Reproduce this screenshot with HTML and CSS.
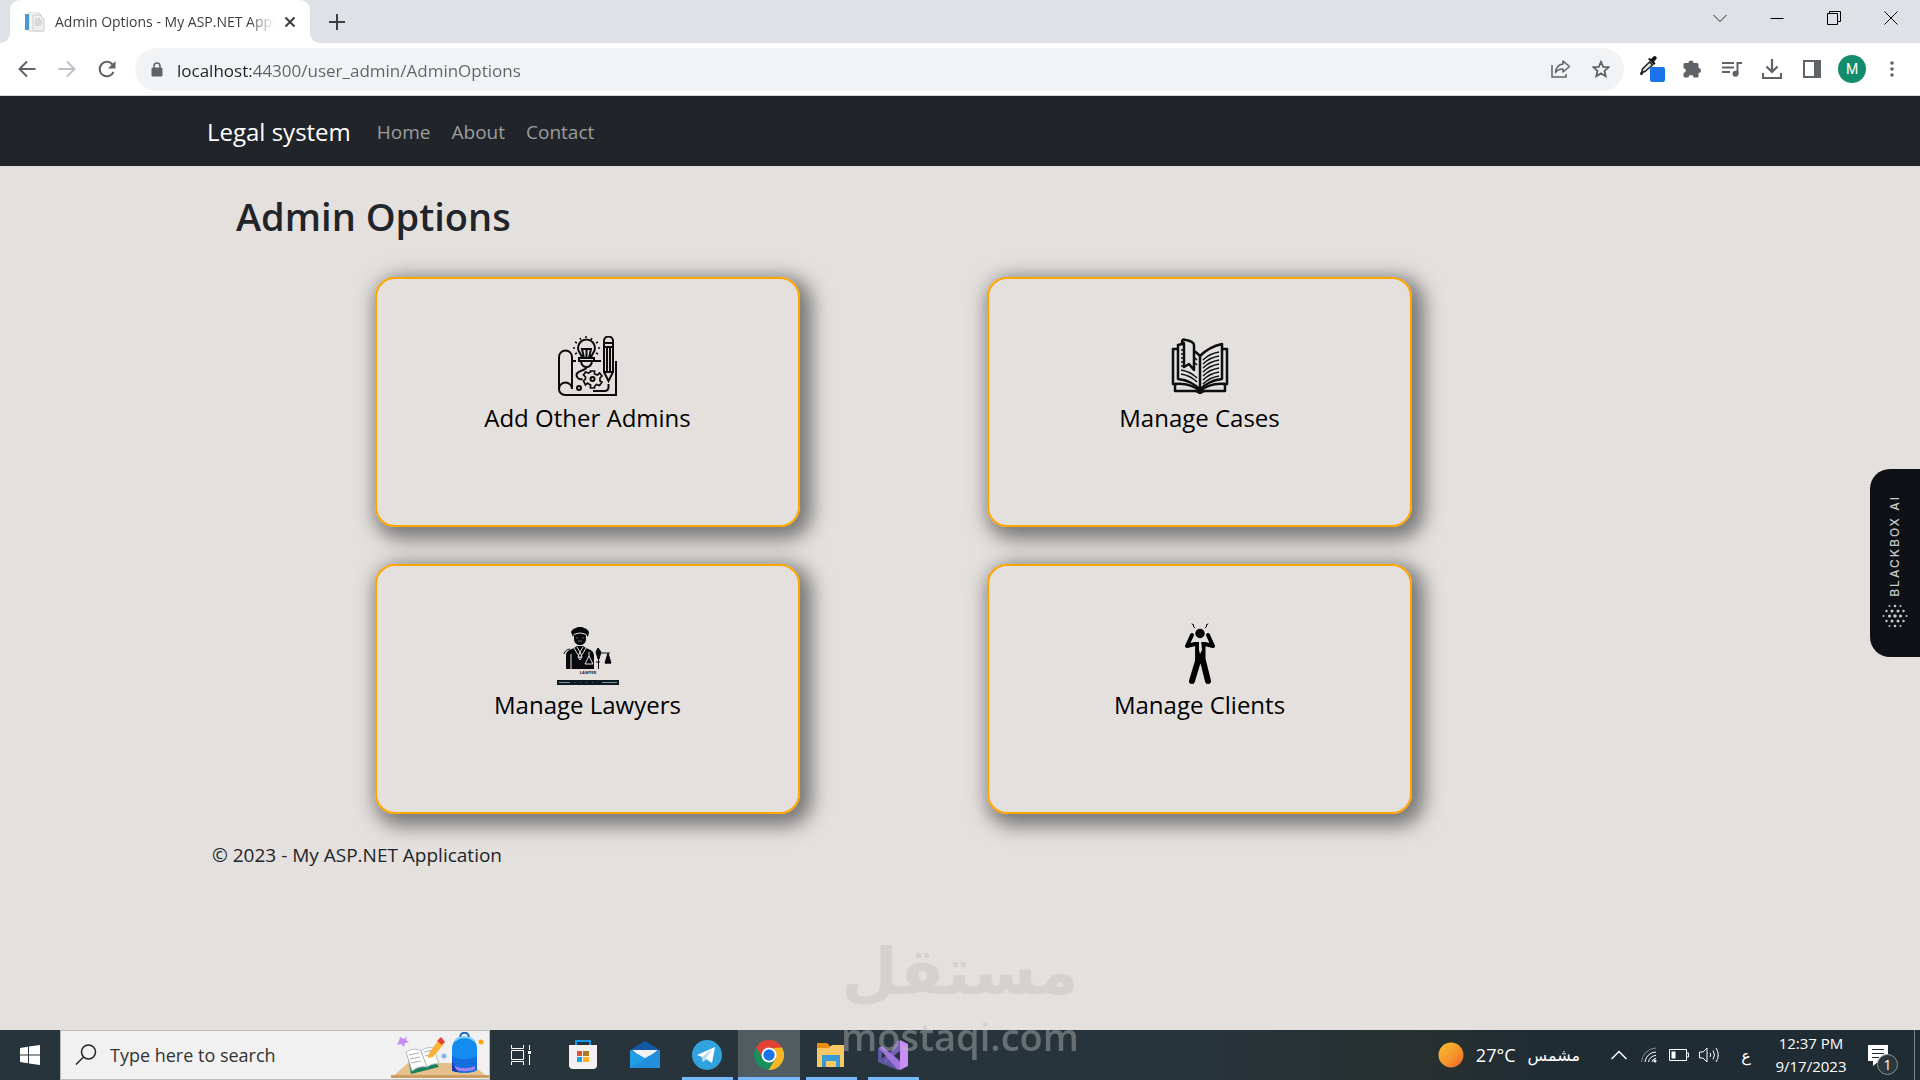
FILE: index.html
```html
<!DOCTYPE html>
<html lang="en">
<head>
<meta charset="utf-8">
<meta name="viewport" content="width=device-width, initial-scale=1">
<title>Admin Options - My ASP.NET Application</title>
<link rel="stylesheet" href="styles.css">
</head>
<body>
<header class="browser">
  <div class="tabstrip">
    <div class="tab">
      <svg class="favicon" width="20" height="20" viewBox="0 0 20 20"><path d="M4 0h9l3 3v16H4z" fill="#f4f4f4" stroke="#d5d5d5"/><path d="M8 3h7l4 4v12H8z" fill="#eee" stroke="#ccc"/><path d="M0 2h4v16H0z" fill="#4a9ad4"/><path d="M10 7h5M10 9h7M10 11h7M10 13h6" stroke="#bcc0c4"/></svg>
      <span class="tab-title">Admin Options - My ASP.NET Application</span>
      <button class="tab-close" aria-label="Close tab"><svg width="12" height="12" viewBox="0 0 12 12"><path d="M1.500 1.500l9 9m0-9l-9 9" stroke="#3c4043" stroke-width="2"/></svg></button>
    </div>
    <button class="new-tab" aria-label="New tab"><svg width="16" height="16" viewBox="0 0 16 16"><path d="M8 0v16M0 8h16" stroke="#3c4043" stroke-width="2"/></svg></button>
    <div class="window-controls">
      <button aria-label="Search tabs"><svg width="14" height="14" viewBox="0 0 14 14"><path d="M.5 4l6.500 6.500L13.500 4" fill="none" stroke="#222"/></svg></button>
      <button aria-label="Minimize"><svg width="14" height="14" viewBox="0 0 14 14"><path d="M.5 7.500h13" stroke="#000"/></svg></button>
      <button aria-label="Restore"><svg width="14" height="14" viewBox="0 0 14 14"><path d="M.5 2.500h10v11H.5zM2.500 2.500v-2h11v10h-3" fill="none" stroke="#000"/></svg></button>
      <button aria-label="Close"><svg width="14" height="14" viewBox="0 0 14 14"><path d="M.5.5l13 13m0-13l-13 13" stroke="#000"/></svg></button>
    </div>
  </div>
  <div class="toolbar">
    <button class="nav-btn" aria-label="Back"><svg width="18" height="18" viewBox="0 0 18 18"><path d="M17.500 9H2M9 1.500L1.500 9 9 16.500" fill="none" stroke="#5f6368" stroke-width="2"/></svg></button>
    <button class="nav-btn" aria-label="Forward"><svg width="18" height="18" viewBox="0 0 18 18"><path d="M.5 9H16M9 1.500L16.500 9 9 16.500" fill="none" stroke="#bdc1c6" stroke-width="2"/></svg></button>
    <button class="nav-btn" aria-label="Reload"><svg width="18" height="18" viewBox="0 0 18 18"><path d="M15.500 12A7.200 7.200 0 1 1 14.500 4.500" fill="none" stroke="#5f6368" stroke-width="2"/><path d="M17.500 1v7.500H10z" fill="#5f6368"/></svg></button>
    <div class="omnibox">
      <svg width="12" height="15" viewBox="0 0 12 15"><path d="M3 6V4a3 3 0 0 1 6 0v2" fill="none" stroke="#5f6368" stroke-width="1.500"/><rect x=".5" y="5.500" width="11" height="9" rx="1.500" fill="#5f6368"/></svg>
      <input class="address" type="text" aria-label="Address" value="localhost:44300/user_admin/AdminOptions">
      <button aria-label="Share"><svg width="20" height="18" viewBox="0 0 20 18"><path d="M1 5v12h14v-3" fill="none" stroke="#5f6368" stroke-width="1.500"/><path d="M12 1l6.500 5.500L12 12V9C8.500 9 6 10 4.500 12.500 5 8 7.500 4.500 12 4z" fill="none" stroke="#5f6368" stroke-width="1.500" stroke-linejoin="round"/></svg></button>
      <button aria-label="Bookmark"><svg width="18" height="18" viewBox="0 0 18 18"><path d="M9 1.800l2.200 5 5.300.5-4 3.600 1.200 5.300L9 13.400l-4.700 2.800 1.200-5.300-4-3.600 5.300-.5z" fill="none" stroke="#5f6368" stroke-width="1.800"/></svg></button>
    </div>
    <div class="extensions">
      <button aria-label="Color picker"><svg width="26" height="28" viewBox="0 0 26 28"><path d="M2.500 18l1-4 7-7 3 3-7 6z" fill="#dfe8e6" stroke="#222" stroke-width="1.500"/><path d="M9 4l6 6 1.500-1.500-1.500-2L17.500 4A2 2 0 0 0 14.500 1.500L12 4l-1.500-1z" fill="#111"/><circle cx="2.500" cy="18.500" r="1.500" fill="#222"/><rect x="11" y="12" width="15" height="15" rx="2" fill="#1a73e8"/></svg></button>
      <button aria-label="Extensions"><svg width="18" height="18" viewBox="0 0 18 18"><path d="M1.800 3H5.500a2.500 2.500 0 1 1 5 0H14a1.500 1.500 0 0 1 1.500 1.500V8a2.500 2.500 0 1 1 0 5v3A1.500 1.500 0 0 1 14 17.500H10.500a2.200 2.200 0 1 0-5 0H2A1.500 1.500 0 0 1 .5 16v-3.200a2.300 2.300 0 1 0 0-4.600V4.500A1.500 1.500 0 0 1 1.800 3z" fill="#5f6368"/></svg></button>
      <button aria-label="Media control"><svg width="20" height="16" viewBox="0 0 20 16"><path d="M0 2h12M0 6.500h12M0 11h8M15.500 13V2H20" fill="none" stroke="#5f6368" stroke-width="2"/><circle cx="13.500" cy="12.800" r="3" fill="#5f6368"/></svg></button>
      <button aria-label="Downloads"><svg width="20" height="20" viewBox="0 0 20 20"><path d="M10 0v12M4.500 7.500L10 13l5.500-5.500M1 14v5h18v-5" fill="none" stroke="#5f6368" stroke-width="2.200"/></svg></button>
      <button aria-label="Side panel"><svg width="18" height="18" viewBox="0 0 18 18"><rect x="1" y="1" width="16" height="16" fill="none" stroke="#5f6368" stroke-width="2"/><path d="M11 1h6v16h-6z" fill="#5f6368"/></svg></button>
      <button class="avatar" aria-label="Profile">M</button>
      <button aria-label="Menu"><svg width="4" height="16" viewBox="0 0 4 16"><circle cx="2" cy="2" r="1.800" fill="#5f6368"/><circle cx="2" cy="8" r="1.800" fill="#5f6368"/><circle cx="2" cy="14" r="1.800" fill="#5f6368"/></svg></button>
    </div>
  </div>
</header>

<div class="page">
  <nav class="navbar">
    <div class="container navbar-row">
      <a class="brand" href="#">Legal system</a>
      <a class="nav-link" href="#">Home</a>
      <a class="nav-link" href="#">About</a>
      <a class="nav-link" href="#">Contact</a>
    </div>
  </nav>
  <main class="container">
    <h1>Admin Options</h1>
    <div class="cards">
      <a class="card" href="#">
        <svg width="62" height="62" viewBox="0 0 62 62" fill="none" stroke="#0b0b0d" stroke-width="2">
          <path d="M2 53V21a6.500 6.500 0 0 1 13 0v32M2 53a6.500 6.500 0 0 1 13 0M2 53a6 6 0 0 0 6 6h51V25M15 25h4M38 25h6"/>
          <path d="M25 22c0-4-4-5-4-10a8.500 8.500 0 0 1 17 0c0 5-4 6-4 10M27 22l-2-9h9l-2 9M29.500 13v9"/>
          <path d="M22 22h15v3H22zM24 26c1 4 3 5 5.500 5s4.500-1 5.500-5M29.500 31c0 4-10 3-10 8 0 3 3 5 6 4"/>
          <path d="M29 0v2M23 2l1 2M35 2l-1 2M18 6l2 1M41 6l-2 1M16 12h2M41 12h2M18 18l2-1M41 18l-2-1" stroke-width="1.500"/>
          <path d="M47 36V5a4.500 4.500 0 0 1 9 0v31l-4.500 9zM47 7h9M47 11h9M47 36h9M50 12v24M53 12v24M51.500 48v3c0 3-2 4-4 4H36"/>
          <path d="M33.500 35h4v3l3 1 2-2 2.500 3-2 2v3l2 1-2.500 3.500-3-1-2 2v1.500h-4V49l-3-2-2 2-2-4 2-2v-2l-2-2 2-3 3 1 2-1z" stroke-width="1.700"/><circle cx="35.500" cy="43" r="2"/><circle cx="22" cy="52" r="2"/>
        </svg>
        <span>Add Other Admins</span>
      </a>
      <a class="card" href="#">
        <svg width="62" height="62" viewBox="0 0 62 62" fill="none" stroke="#0b0f12" stroke-width="2.500" stroke-linejoin="round">
          <path d="M8 13H4v35h4M54 13h4v35h-4M6 48v7h20c3 0 3 2 5 2s2-2 5-2h20v-7"/>
          <path d="M13 8L9 9v34c9 1 17 5 22 11 5-6 13-10 22-11V8c-9 2-17 7-22 12-2-2-4-4-6-5M31 20v35"/>
          <path d="M6 48c11-1 18 1 25 7 7-6 14-8 25-7"/>
          <path d="M34 24c4-4 10-7 16-8M34 28c4-4 10-7 16-8M34 32c4-4 10-7 16-8M34 36c4-4 10-7 16-8M34 40c4-4 10-7 16-8M34 44c4-4 10-7 16-8M34 48c4-4 10-7 16-8M12 14h3M12 18h3M12 22h3M12 26h3M12 30h3M12 34c6 1 12 4 16 8M12 38c6 1 12 4 16 8M26 22l2 2M26 27l2 2" stroke-width="1.500"/>
          <path d="M13 8c0-5 1-5 4-4 5 1 8 2 8 5v25l-5-6-5 3V9c0-3 0-3-2-1z" fill="#e4e0dd"/>
        </svg>
        <span>Manage Cases</span>
      </a>
      <a class="card" href="#">
        <svg width="62" height="62" viewBox="0 0 62 62">
          <path d="M14 9c1-3 6-5 9-5s8 2 9 5l-1 5-2-3c-4-2-8-2-12 0l-1 3z" fill="#08090c"/><path d="M17 12c4-2 8-2 12 0v4c0 4-3 6-6 6s-6-2-6-6z" fill="#08090c"/><path d="M19 15h2m4 0h2M21 18h4" stroke="#667"/>
          <path d="M9 46V33c0-5 3-6 8-8l3-2h6l3 2c5 2 8 3 8 8v13z" fill="#08090c"/><path d="M17 25l6 10 6-10M20 24l3 5 3-5M23 29l-2 5 2 3 2-3zM14 31v15M32 29v4M32 33l-4 8h8z" fill="none" stroke="#e4e0dd"/>
          <path d="M7 31c1-3 3-5 6-5M39 30h14" fill="none" stroke="#17181c"/><path d="M41 25l3 4-2 7h-1l-2-7zM41.500 36v10M39 39h4M51 30l-3 10h6zM48 40h6" stroke="#08090c" fill="#08090c"/>
          <path d="M0 57h62v5H0z" fill="#0c1a22"/><path d="M2 59.500h11M45 59.500h15" stroke="#84909a"/><path d="M17 59.500h24" stroke="#566570" stroke-dasharray="1 5"/>
          <text class="icon-caption" x="31" y="51" text-anchor="middle">LAWYER</text>
        </svg>
        <span>Manage Lawyers</span>
      </a>
      <a class="card" href="#">
        <svg width="62" height="62" viewBox="0 0 62 62" fill="none" stroke="#000" stroke-linecap="round" stroke-linejoin="round">
          <path d="M23 12l-5 11 8-2h10l8 2-5-11" stroke-width="4"/><path d="M27 20h9v20h-9z" fill="#000" stroke-width="1"/><path d="M29 38l-6 20M34 38l5 20" stroke-width="6"/><circle cx="31" cy="10.500" r="4.700" fill="#000" stroke="none"/><path d="M30 17h2l1 10-2 4-1-4z" fill="#e4e0dd" stroke="none"/><path d="M23 1l2 1-1 1 2 2M39 1l-2 1 1 1-2 2"/>
        </svg>
        <span>Manage Clients</span>
      </a>
    </div>
    <footer>© 2023 - My ASP.NET Application</footer>
  </main>
</div>

<aside class="blackbox">
  <span>BLACKBOX AI</span>
  <svg width="26" height="26" viewBox="0 0 26 26" fill="#c9cacc"><circle cx="7.500" cy="3" r="1"/><circle cx="13" cy="3" r="1.300"/><circle cx="18.500" cy="3" r="1"/><circle cx="4.500" cy="8" r="1.200"/><circle cx="10" cy="8" r="1.500"/><circle cx="16" cy="8" r="1.500"/><circle cx="21.500" cy="8" r="1.200"/><circle cx="1.500" cy="13" r="1"/><circle cx="7.500" cy="13" r="1.600"/><circle cx="13" cy="13" r="1.800"/><circle cx="18.500" cy="13" r="1.600"/><circle cx="24.500" cy="13" r="1"/><circle cx="4.500" cy="18" r="1.200"/><circle cx="10" cy="18" r="1.500"/><circle cx="16" cy="18" r="1.500"/><circle cx="21.500" cy="18" r="1.200"/><circle cx="7.500" cy="23" r="1"/><circle cx="13" cy="23" r="1.300"/><circle cx="18.500" cy="23" r="1"/></svg>
</aside>

<div class="taskbar">
  <button class="start" aria-label="Start"><svg width="20" height="20" viewBox="0 0 20 20" fill="#fff"><path d="M0 3l8-1.200V9.500H0zM9 1.600L20 0v9.500H9zM0 10.500h8v7.700L0 17zM9 10.500h11V20L9 18.400z"/></svg></button>
  <div class="search">
    <svg width="22" height="22" viewBox="0 0 22 22" fill="none" stroke="#222" stroke-width="1.500"><circle cx="13.500" cy="8" r="7"/><path d="M8.500 13L1 20.500"/></svg>
    <input type="text" aria-label="Search" placeholder="Type here to search">
    <svg width="98" height="46" viewBox="0 0 98 46"><path d="M0 46l17-15h62l19 15z" fill="#e6c08b"/><path d="M0 43h98v3H0z" fill="#cd9c62"/><path d="M9 5l4 2 3-3-1 4 3 2-4 1-1 4-3-3-4 1 2-4z" fill="#c88bf4"/><path d="M16 22l4 20 28-7-3-5z" fill="#16805c"/><path d="M15 20c5-3 10-4 15-1 4-3 8-4 13-3l5 16c-5-1-9 1-12 3-5-1-10 0-15 4z" fill="#fff" stroke="#b8bcc0"/><path d="M30 19l6 16M18 23l10-2M19 27l10-2M20 31l10-2M33 20l9-2M34 24l9-2" stroke="#a9aeb4"/><path d="M38 21l9-12 5 4-10 12-5 1z" fill="#f9b233"/><path d="M46 9l4-4 4 5-3 3z" fill="#e5432d"/><circle cx="53" cy="24" r="2.500" fill="#79b9ef"/><circle cx="90" cy="10" r="2.500" fill="#fba512"/><path d="M69 6c0-7 9-7 9 0" fill="none" stroke="#1763c9" stroke-width="2"/><path d="M61 16c0-14 25-14 25 0v21c0 5-25 5-25 0z" fill="#138bef"/><path d="M64 9c4-5 15-5 19 0" fill="none" stroke="#76cfff" stroke-width="2"/><path d="M61 24c7 4 18 4 25 0v13c0 5-25 5-25 0z" fill="#126fdd"/><path d="M64 34c6 3 13 3 20 0v3c-4 3-16 3-20 0z" fill="#a981ee"/><path d="M61 27v12c3 1 5 1 7 1-4-3-6-8-7-13z" fill="#163fad"/></svg>
  </div>
  <div class="apps">
    <button aria-label="Task view"><svg width="20" height="20" viewBox="0 0 20 20" fill="none" stroke="#fff"><path d="M.5 0v3.500h12V0M.5 20v-3.500h12V20M.5 5.500h12v9H.5zM18.500 0v5M18.500 10v10"/><path d="M17 6h3v3h-3z" fill="#fff" stroke="none"/></svg></button>
    <button aria-label="Microsoft Store"><svg width="30" height="30" viewBox="0 0 30 30"><path d="M8 6V1h14v5" fill="none" stroke="#1699e8" stroke-width="2"/><path d="M1 5h28v20q0 4-4 4H5q-4 0-4-4z" fill="#f2f2f2"/><path d="M9 11h5v5H9z" fill="#e84e32"/><path d="M15 11h6v5h-6z" fill="#ad7a1f"/><path d="M9 17h5v5H9z" fill="#1b9ff1"/><path d="M15 17h6v5h-6z" fill="#ffb31a"/></svg></button>
    <button aria-label="Mail"><svg width="30" height="30" viewBox="0 0 30 30"><path d="M0 10L15 1l15 9v8H0z" fill="#1459a8"/><path d="M2 10h26L15 20z" fill="#f2f2f2"/><path d="M0 10l15 8 15-8v18H0z" fill="#209fe7"/><path d="M30 10L0 28h30z" fill="#238edc"/></svg></button>
    <button class="running" aria-label="Telegram"><svg width="30" height="30" viewBox="0 0 30 30"><circle cx="15" cy="15" r="15" fill="#30a3df"/><path d="M5 15L23 7l-3 16-6-4-3 3-1-5z" fill="#fff"/><path d="M10 17l10-8-6 9-3 4z" fill="#b8dced"/></svg></button>
    <button class="running active" aria-label="Google Chrome"><svg width="30" height="30" viewBox="0 0 30 30"><circle cx="15" cy="15" r="15" fill="#188f5c"/><path d="M2 7.500a15 15 0 0 1 26 0L22 11H15l-6 7z" fill="#e34133"/><path d="M28 7.500A15 15 0 0 1 14.500 30L22 18 19 8z" fill="#f8b52a"/><circle cx="15" cy="15" r="7.500" fill="#fff"/><circle cx="15" cy="15" r="5.700" fill="#1a73e8"/></svg></button>
    <button class="running" aria-label="File Explorer"><svg width="28" height="26" viewBox="0 0 28 26"><path d="M0 1h10l3 3h9v4H0z" fill="#e98d12"/><path d="M0 6h12l3-3h12v22H0z" fill="#f9c865"/><path d="M5 25V13h18v12h-4v-6H9v6z" fill="#389bd7"/></svg></button>
    <button class="running" aria-label="Visual Studio"><svg width="30" height="30" viewBox="0 0 30 30"><path d="M0 8l4-2 18 21-2 3L0 22zM4 11v8l4-4z" fill="#6057a4" fill-rule="evenodd"/><path d="M6 23L20 0l3 2v8L6 24z" fill="#7465b4"/><path d="M4 6l18 15v9l-3-1L1 8z" fill="#a074dc"/><path d="M22 0l8 4v22l-8 4z" fill="#c98df4"/></svg></button>
  </div>
  <div class="tray">
    <button class="weather"><svg width="26" height="26" viewBox="0 0 26 26"><defs><linearGradient id="sun" x1="0" y1="0" x2="1" y2="1"><stop stop-color="#f9bd30"/><stop offset=".6" stop-color="#f3922a"/><stop offset="1" stop-color="#ec5a2c"/></linearGradient></defs><circle cx="13" cy="13" r="12.500" fill="url(#sun)"/></svg><span>27°C</span><span lang="ar" class="arabic">مشمس</span></button>
    <button class="tray-icon" aria-label="Show hidden icons"><svg width="16" height="10" viewBox="0 0 16 10"><path d="M.5 9L8 1.500 15.500 9" fill="none" stroke="#fff" stroke-width="1.500"/></svg></button>
    <button class="tray-icon" aria-label="Wi-Fi"><svg width="16" height="16" viewBox="0 0 16 16" fill="none" stroke="#fff"><path d="M.5 15A15 15 0 0 1 15 1" stroke="#83898c"/><path d="M4 15A11 11 0 0 1 15 5M7.500 15A7.500 7.500 0 0 1 15 8.500M11 15a4 4 0 0 1 4-3.500"/><circle cx="14" cy="14" r="1.500" fill="#fff" stroke="none"/></svg></button>
    <button class="tray-icon" aria-label="Battery"><svg width="20" height="12" viewBox="0 0 20 12"><path d="M.5.5h17v11H.5zM18 4h1.500v4H18" fill="none" stroke="#fff"/><path d="M2.500 2.500h4v7h-4z" fill="#fff"/></svg></button>
    <button class="tray-icon" aria-label="Volume"><svg width="20" height="18" viewBox="0 0 20 18" fill="none" stroke="#fff"><path d="M.5 6v6H4l4 4V2L4 6zM11 7q1.500 2 0 4M14 4.500q3 4.500 0 9M17 2q4.500 7 0 14"/></svg></button>
    <button class="language arabic" lang="ar">ع</button>
    <button class="clock"><span>12:37 PM</span><span>9/17/2023</span></button>
    <button class="notifications" aria-label="Notifications"><svg width="20" height="21" viewBox="0 0 20 21"><path d="M0 0h20v16h-9l-6 5v-5H0z" fill="#fff"/><path d="M4 4.500h12M4 8.500h12M4 12.500h7" stroke="#1f2c33"/></svg><span class="count">1</span></button>
  </div>
</div>
<div class="watermark" aria-hidden="true"><span class="watermark-ar" lang="ar">مستقل</span><span class="watermark-en">mostaqi.com</span></div>
</body>
</html>
```
FILE: styles.css
```css
* { box-sizing: border-box; }
body {
  margin: 0;
  min-height: 100vh;
  display: flex;
  flex-direction: column;
  background: #e4e0dd;
  color: #212529;
  font-family: "Open Sans", "Noto Sans", sans-serif;
}
button { border: 0; padding: 0; background: none; color: inherit; font: inherit; }
button, .extensions, .window-controls { display: flex; align-items: center; justify-content: center; }
svg { flex: none; }
a { color: inherit; text-decoration: none; }

/* Browser window */
.tabstrip { display: flex; height: 43px; padding-left: 10px; background: #dee1e6; }
.tab {
  position: relative;
  display: flex;
  align-items: center;
  width: 300px;
  padding: 0 10px 0 15px;
  background: #fff;
  border-radius: 10px 10px 0 0;
}
.tab::before, .tab::after {
  content: "";
  position: absolute;
  bottom: 0;
  width: 10px;
  height: 10px;
}
.tab::before { left: -10px; background: radial-gradient(circle at 0 0, #dee1e6 10px, #fff 10px); }
.tab::after { right: -10px; background: radial-gradient(circle at 100% 0, #dee1e6 10px, #fff 10px); }
.tab-title {
  flex: 1;
  margin-left: 10px;
  overflow: hidden;
  white-space: nowrap;
  color: #3c4043;
  font-size: 14px;
  line-height: 20px;
  -webkit-mask-image: linear-gradient(to right, #000 88%, transparent);
  mask-image: linear-gradient(to right, #000 88%, transparent);
}
.tab-close { width: 20px; height: 20px; margin-left: 5px; }
.new-tab { width: 54px; }
.window-controls { height: 36px; margin-left: auto; padding-right: 1px; }
.window-controls button { width: 57px; height: 36px; }
.toolbar {
  display: flex;
  align-items: center;
  height: 53px;
  padding: 0 8px 0 7px;
  background: #fff;
  border-bottom: 1px solid #d5d7da;
}
.nav-btn { width: 40px; height: 40px; }
.omnibox {
  display: flex;
  align-items: center;
  flex: 1;
  height: 43px;
  margin-left: 8px;
  padding: 0 3px 0 16px;
  border-radius: 22px;
  background: #f1f3f4;
}
.omnibox button { width: 40px; height: 40px; }
.address {
  flex: 1;
  min-width: 0;
  height: 32px;
  margin: 0;
  padding: 2px 0 0 14px;
  border: 0;
  outline: 0;
  background: linear-gradient(to right, #202124 88px, #5f6368 88px);
  -webkit-background-clip: text;
  background-clip: text;
  color: #5f6368;
  -webkit-text-fill-color: transparent;
  font: 17px/30px "Open Sans", "Noto Sans", sans-serif;
}
.extensions { padding-left: 8px; }
.extensions button { width: 40px; height: 40px; }
.extensions .avatar {
  width: 28px;
  height: 28px;
  margin: 0 6px;
  border-radius: 50%;
  background: #128c6c;
  color: #fff;
  font: 14px/28px Roboto, sans-serif;
}

/* Web page */
.page { flex: 1; }
.container { max-width: 1536px; margin: 0 auto; padding: 0 15px; }
.navbar { background: #212529; }
.navbar .navbar-row { display: flex; align-items: center; height: 70px; gap: 21px; padding-top: 2px; }
.brand { margin-right: 5px; color: #fff; font-size: 24px; line-height: 38px; }
.nav-link { color: #9b9d9f; font-size: 19px; line-height: 30px; }
h1 { margin: 25px 0 36px 29px; font-size: 38px; line-height: 50px; font-weight: 600; }
.cards { display: grid; grid-template-columns: 425px 425px; gap: 37px 187px; margin-left: 168px; }
.card {
  display: flex;
  flex-direction: column;
  align-items: center;
  height: 250px;
  padding-top: 57px;
  border: 2px solid orange;
  border-radius: 20px;
  box-shadow: 6px 6px 19px 6px #777;
  color: #000;
  font-size: 24px;
  line-height: 38px;
}
.card span { margin-top: 1px; }
.icon-caption { font: 700 4px "Open Sans", sans-serif; fill: #222; }
footer { margin: 26px 0 0 5px; font-size: 19px; line-height: 30px; }

/* Side widget */
.blackbox {
  position: fixed;
  top: 469px;
  right: 0;
  display: flex;
  flex-direction: column;
  align-items: center;
  gap: 6px;
  width: 50px;
  height: 188px;
  padding-top: 26px;
  border-radius: 20px 0 0 20px;
  background: #0f1117;
  color: #c9cacc;
}
.blackbox span { writing-mode: vertical-rl; transform: rotate(180deg); font: 500 12px/14px Inter, sans-serif; letter-spacing: 2px; }

/* Taskbar */
.taskbar {
  display: flex;
  height: 50px;
  background: linear-gradient(to right, #27343b 0, #27343b 62%, #28302f 74%, #202c34 80%, #1f2c33);
  color: #fff;
}
.start { width: 60px; }
.search {
  display: flex;
  align-items: center;
  width: 430px;
  padding-left: 14px;
  border: 1px solid #bbb;
  background: #f1f1f1;
}
.search input {
  flex: 1;
  min-width: 0;
  padding: 0 0 0 13px;
  border: 0;
  outline: 0;
  background: none;
  font: 18px/24px "Open Sans", "Noto Sans", sans-serif;
}
.search input::placeholder { color: #333; opacity: 1; }
.apps { display: flex; }
.apps button { width: 62px; }
.apps .running {
  background: linear-gradient(#76b9ff, #76b9ff) center bottom / 51px 3px no-repeat;
}
.apps .active { background: linear-gradient(#76b9ff, #76b9ff) center bottom / 100% 3px no-repeat #515c61; }
.tray { display: flex; margin-left: auto; margin-right: 5px; padding-right: 12px; border-right: 1px solid #77848b; }
.weather { gap: 12px; margin-right: 24px; font-size: 18px; }
.arabic { font-family: "DejaVu Sans", sans-serif; font-size: 16px; }
.tray-icon { width: 30px; }
.language { width: 44px; }
.clock { flex-direction: column; width: 86px; font-size: 15px; line-height: 23px; }
.notifications { position: relative; width: 48px; }
.count {
  position: absolute;
  left: 23px;
  top: 24px;
  width: 21px;
  height: 21px;
  border: 1px solid #8b9397;
  border-radius: 50%;
  background: #2d383e;
  font-size: 14px;
  line-height: 19px;
}

/* Overlay mark */
.watermark {
  position: fixed;
  left: 0;
  right: 0;
  bottom: 18px;
  display: flex;
  flex-direction: column;
  align-items: center;
  color: #bfbfbf;
  opacity: .43;
  pointer-events: none;
}
.watermark-ar { font: 700 65px/76px "DejaVu Sans", sans-serif; }
.watermark-en { font: 600 38px/52px "Open Sans", sans-serif; }
```
